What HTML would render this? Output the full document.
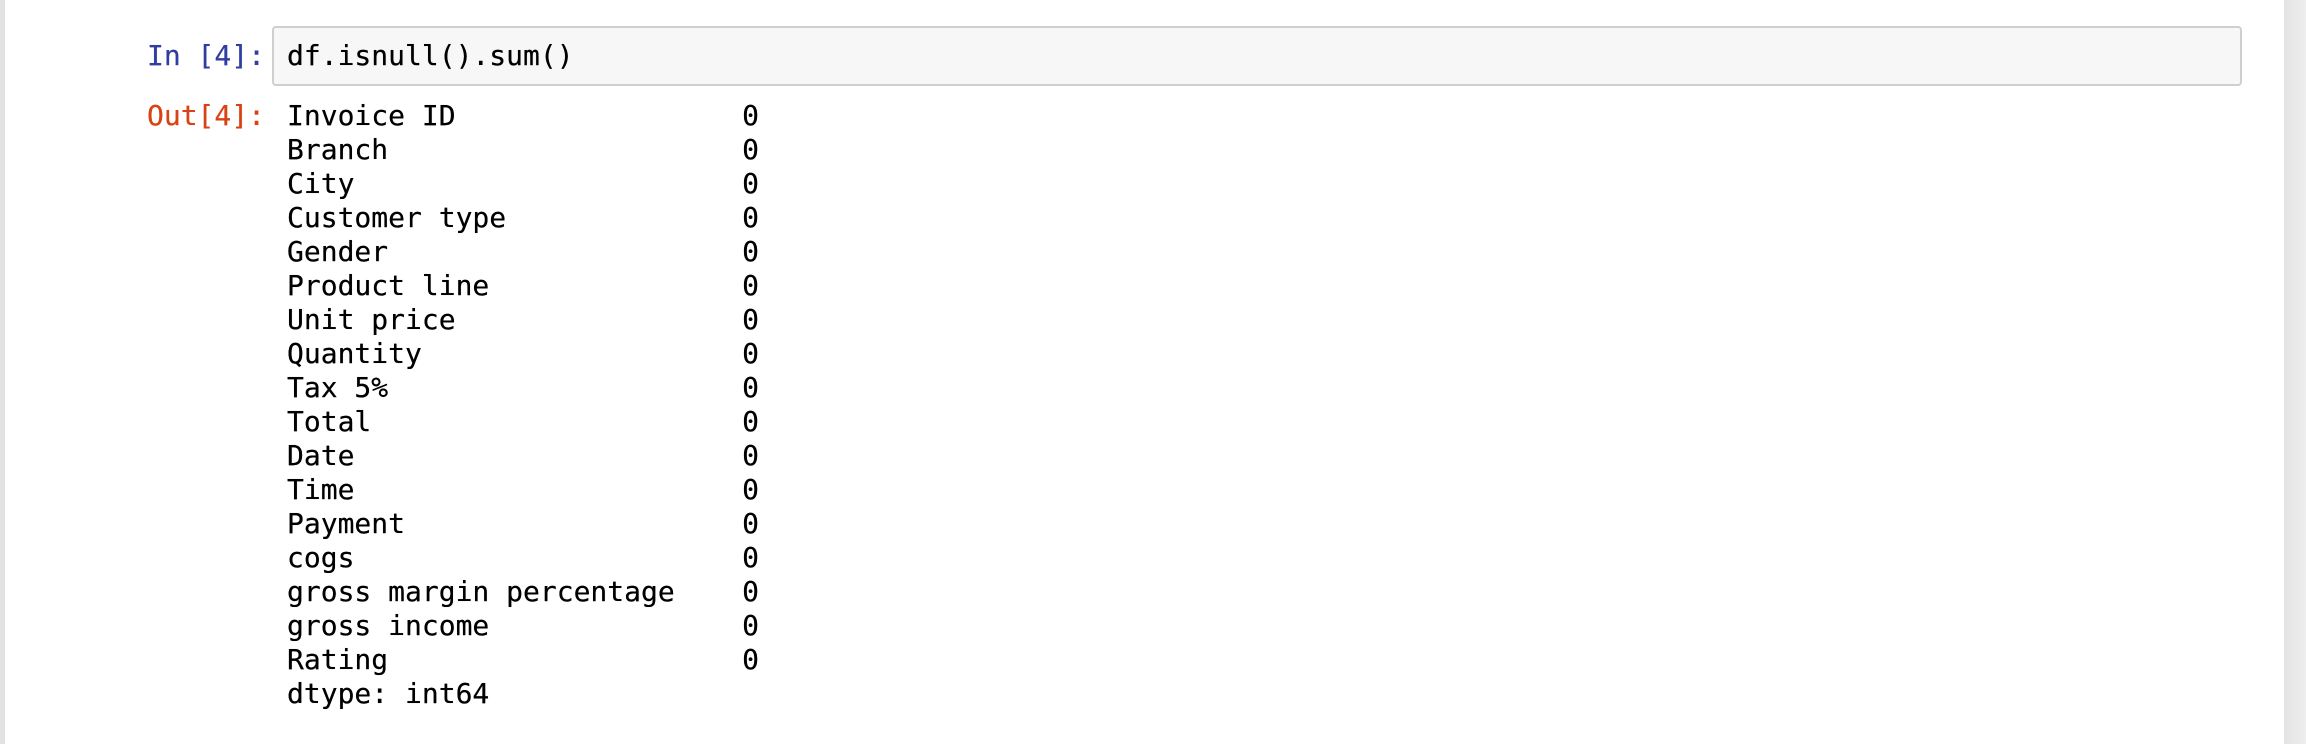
<!DOCTYPE html>
<html><head><meta charset="utf-8"><style>
html,body{margin:0;padding:0;background:#fff;width:2306px;height:744px;overflow:hidden;position:relative}
.l{position:absolute;left:0;top:0;width:5px;height:744px;background:#e2e2e2}
.r{position:absolute;left:2284px;top:0;width:22px;height:744px;background:linear-gradient(90deg,#e3e3e3,#eeeeee)}
.mono{font-family:"DejaVu Sans Mono","Liberation Mono",monospace;font-size:28px;line-height:34px;white-space:pre;position:absolute;text-shadow:0 0 0.4px currentColor}
.box{position:absolute;left:272px;top:26px;width:1966px;height:56px;background:#f7f7f7;border:2px solid #cfcfcf;border-radius:4px}
.pin{color:#303F9F;right:2041px;top:39px}
.pout{color:#D84315;right:2041px;top:99px}
</style></head><body>
<div class="l"></div><div class="r"></div>
<div class="box"></div>
<div class="mono pin">In [4]:</div>
<div class="mono" style="left:287px;top:39px;color:#000">df.isnull().sum()</div>
<div class="mono pout">Out[4]:</div>
<div class="mono" style="left:287px;top:99px;color:#000">Invoice ID                 0
Branch                     0
City                       0
Customer type              0
Gender                     0
Product line               0
Unit price                 0
Quantity                   0
Tax 5%                     0
Total                      0
Date                       0
Time                       0
Payment                    0
cogs                       0
gross margin percentage    0
gross income               0
Rating                     0
dtype: int64</div>
</body></html>
